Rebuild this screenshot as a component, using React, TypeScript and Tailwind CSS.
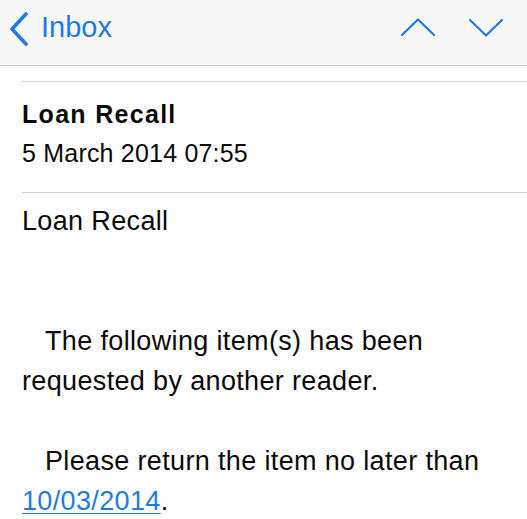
import React from 'react';

const blue = 'text-[#1f7be2]';

const App: React.FC = () => {
    return (
        <div className="min-h-[519px] w-[527px] bg-white font-['Liberation_Sans',Arial,sans-serif] text-[#0a0a0a] overflow-hidden">
            {/* nav bar */}
            <div className="h-[66px] bg-[#f7f7f8] border-b border-[#c9c9cb] flex items-start justify-between">
                <div className={`flex items-start pt-[12px] pl-[9px] ${blue}`}>
                    <svg width="20" height="34" viewBox="0 0 20 34" fill="none" stroke="currentColor" strokeWidth={3.6} strokeLinecap="round" strokeLinejoin="round">
                        <path d="M17 2 L3 17 L17 32" />
                    </svg>
                    <span className="ml-[12px] text-[29px] leading-[29px] pt-[1px]">Inbox</span>
                </div>
                <div className={`flex items-start gap-[32px] pt-[18px] pr-[23px] ${blue}`}>
                    <svg width="36" height="20" viewBox="0 0 36 20" fill="none" stroke="currentColor" strokeWidth={2.2} strokeLinecap="round" strokeLinejoin="round">
                        <path d="M2 17 L18 1.5 L34 17" />
                    </svg>
                    <svg width="36" height="20" viewBox="0 0 36 20" fill="none" stroke="currentColor" strokeWidth={2.2} strokeLinecap="round" strokeLinejoin="round">
                        <path d="M2 2 L18 17.5 L34 2" />
                    </svg>
                </div>
            </div>

            {/* header */}
            <div className="pl-[22px] pt-[15px]">
                <div className="h-px bg-[#d4d4d6]" />
                <div className="pt-[15px] pb-[22px]">
                    <div className="text-[25px] leading-[34px] font-bold tracking-[1.3px]">Loan Recall</div>
                    <div className="mt-[5px] text-[25px] leading-[34px] tracking-[0.2px]">5 March 2014 07:55</div>
                </div>
                <div className="h-px bg-[#d4d4d6]" />
            </div>

            {/* body */}
            <div className="px-[22px] pt-[8px] text-[27px] leading-[40px] tracking-[0.35px]">
                <p>Loan Recall</p>
                <p className="mt-[80px] indent-[23px]">The following item(s) has been requested by another reader.</p>
                <p className="mt-[40px] indent-[23px]">
                    Please return the item no later than{' '}
                    <a href="#" className={`${blue} underline underline-offset-[3px] decoration-[1px]`}>10/03/2014</a>.
                </p>
            </div>
        </div>
    );
};

export default App;
